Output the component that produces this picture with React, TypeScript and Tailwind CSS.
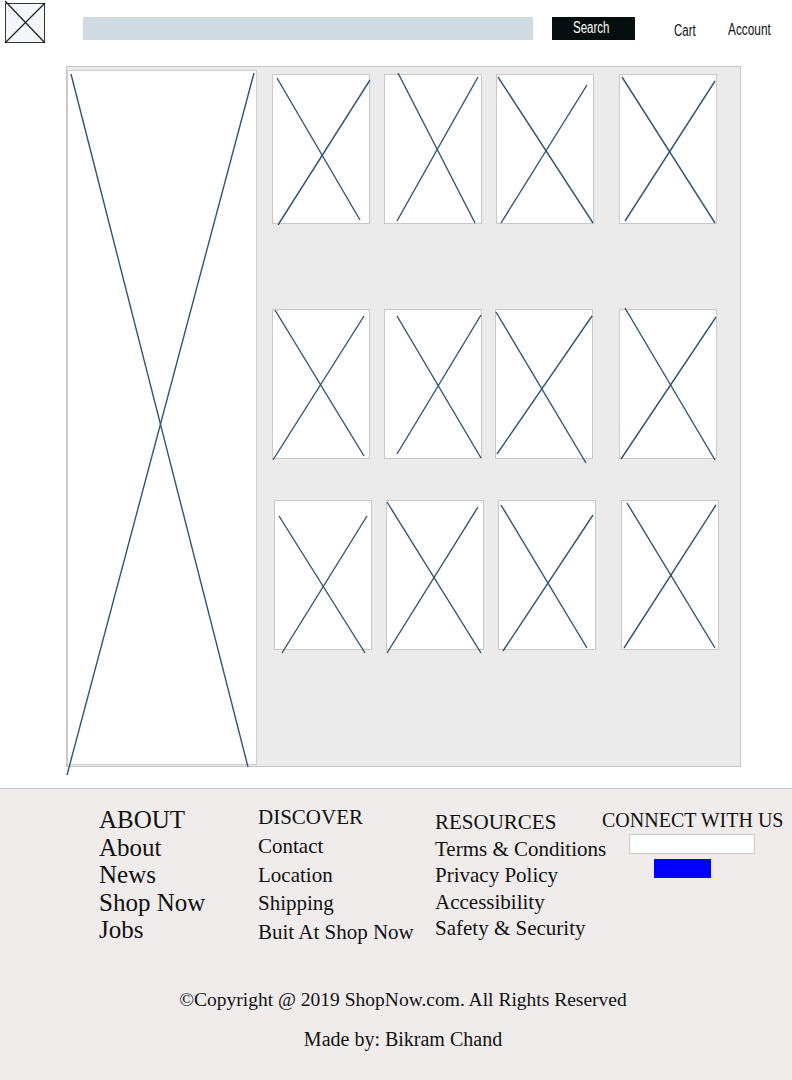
import React from "react";

type Line = [number, number, number, number];
type Card = { x: number; y: number; lines: Line[] };

const LINE = "#2f5575";

const rows: { mt: string; cards: { ml: string; card: Card }[] }[] = [
  {
    mt: "mt-[7px]",
    cards: [
      { ml: "ml-[15px]", card: { x: 272, y: 74, lines: [[276, 77, 359, 219], [369, 79, 277, 224]] } },
      { ml: "ml-[14px]", card: { x: 384, y: 74, lines: [[397, 72, 474, 222], [477, 76, 396, 220]] } },
      { ml: "ml-[14px]", card: { x: 496, y: 74, lines: [[497, 76, 592, 222], [586, 84, 500, 222]] } },
      { ml: "ml-[25px]", card: { x: 619, y: 74, lines: [[621, 76, 714, 222], [714, 80, 624, 220]] } },
    ],
  },
  {
    mt: "mt-[85px]",
    cards: [
      { ml: "ml-[15px]", card: { x: 272, y: 309, lines: [[274, 309, 363, 455], [363, 315, 272, 459]] } },
      { ml: "ml-[14px]", card: { x: 384, y: 309, lines: [[396, 315, 480, 457], [480, 314, 396, 453]] } },
      { ml: "ml-[13px]", card: { x: 495, y: 309, lines: [[495, 311, 585, 462], [591, 315, 496, 453]] } },
      { ml: "ml-[26px]", card: { x: 619, y: 309, lines: [[624, 307, 714, 459], [715, 316, 620, 458]] } },
    ],
  },
  {
    mt: "mt-[41px]",
    cards: [
      { ml: "ml-[17px]", card: { x: 274, y: 500, lines: [[278, 515, 364, 652], [366, 515, 281, 652]] } },
      { ml: "ml-[14px]", card: { x: 386, y: 500, lines: [[386, 501, 480, 652], [477, 506, 386, 652]] } },
      { ml: "ml-[14px]", card: { x: 498, y: 500, lines: [[500, 504, 586, 647], [592, 514, 502, 650]] } },
      { ml: "ml-[25px]", card: { x: 621, y: 500, lines: [[626, 502, 714, 647], [715, 504, 623, 647]] } },
    ],
  },
];

function Cross({ x, y, lines }: Card) {
  return (
    <svg className="absolute left-0 top-0" width="1" height="1" style={{ overflow: "visible" }}>
      {lines.map((l, i) => (
        <line
          key={i}
          x1={l[0] - x}
          y1={l[1] - y}
          x2={l[2] - x}
          y2={l[3] - y}
          stroke={LINE}
          strokeWidth={1.4}
        />
      ))}
    </svg>
  );
}

const serif = { fontFamily: '"Liberation Serif", "Times New Roman", serif' } as const;

export default function App() {
  return (
    <div className="w-[792px] min-h-[1080px] bg-white flex flex-col">
      {/* Header */}
      <div
        className="flex items-start h-[66px] text-[#111]"
        style={{ fontFamily: '"Liberation Sans", Arial, sans-serif' }}
      >
        <div className="relative ml-[5px] mt-[3px] w-[40px] h-[40px] border border-[#333] bg-[#f3f7f9]">
          <svg className="absolute -left-px -top-px" width="40" height="40" style={{ overflow: "visible" }}>
            <line x1="0" y1="-2" x2="40" y2="40" stroke="#222" strokeWidth="1.3" />
            <line x1="40" y1="0" x2="0" y2="40" stroke="#222" strokeWidth="1.3" />
          </svg>
        </div>
        <div className="ml-[38px] mt-[17px] w-[450px] h-[23px] bg-[#cfdbe1]" />
        <div className="ml-[19px] mt-[17px] w-[83px] h-[23px] bg-[#050d0e] text-white text-[16px] leading-[22px] pl-[21px]">
          <span className="inline-block origin-left scale-x-[0.72]">Search</span>
        </div>
        <div className="ml-[39px] mt-[21px] w-[54px] text-[16px] leading-[20px]">
          <span className="inline-block origin-left scale-x-[0.72]">Cart</span>
        </div>
        <div className="mt-[20px] text-[16px] leading-[20px]">
          <span className="inline-block origin-left scale-x-[0.74]">Account</span>
        </div>
      </div>

      {/* Main panel */}
      <div className="ml-[66px] w-[675px] h-[701px] border border-[#c6c6c6] bg-[#ebebeb] flex items-start">
        <div className="relative mt-[3px] w-[190px] h-[695px] bg-white border border-[#cfcfcf]">
          <Cross x={67} y={70} lines={[[70, 73, 247, 766], [253, 72, 66, 774]]} />
        </div>
        <div className="flex flex-col">
          {rows.map((r, ri) => (
            <div key={ri} className={`flex ${r.mt}`}>
              {r.cards.map((c, ci) => (
                <div
                  key={ci}
                  className={`relative ${c.ml} w-[98px] h-[150px] bg-white border border-[#c8c8c8]`}
                >
                  <Cross {...c.card} />
                </div>
              ))}
            </div>
          ))}
        </div>
      </div>

      {/* Footer */}
      <div className="mt-[21px] border-t border-[#c8c8c8] bg-[#f0ecec] h-[292px] text-[#111]" style={serif}>
        <div className="flex h-[190px] pl-[99px]">
          <div className="w-[159px] pt-[17px] text-[25px] leading-[27.5px] whitespace-nowrap">
            <div>ABOUT</div>
            <div>About</div>
            <div>News</div>
            <div>Shop Now</div>
            <div>Jobs</div>
          </div>
          <div className="w-[177px] pt-[14px] text-[21px] leading-[28.75px] whitespace-nowrap">
            <div>DISCOVER</div>
            <div>Contact</div>
            <div>Location</div>
            <div>Shipping</div>
            <div>Buit At Shop Now</div>
          </div>
          <div className="w-[167px] pt-[20px] text-[21px] leading-[26.5px] whitespace-nowrap">
            <div>RESOURCES</div>
            <div>Terms &amp; Conditions</div>
            <div>Privacy Policy</div>
            <div>Accessibility</div>
            <div>Safety &amp; Security</div>
          </div>
          <div className="pt-[19px] flex flex-col">
            <div className="text-[20px] leading-[24px] whitespace-nowrap">CONNECT WITH US</div>
            <div className="ml-[27px] mt-[2px] w-[126px] h-[20px] bg-white border border-[#c8c8c8]" />
            <div className="ml-[52px] mt-[5px] w-[57px] h-[19px] bg-[#0000ff]" />
          </div>
        </div>
        <div className="pl-[14px] mt-[9px] text-center text-[19.5px] leading-[24px]">
          ©Copyright @ 2019 ShopNow.com. All Rights Reserved
        </div>
        <div className="pl-[14px] mt-[15px] text-center text-[20px] leading-[24px]">Made by: Bikram Chand</div>
      </div>
    </div>
  );
}
